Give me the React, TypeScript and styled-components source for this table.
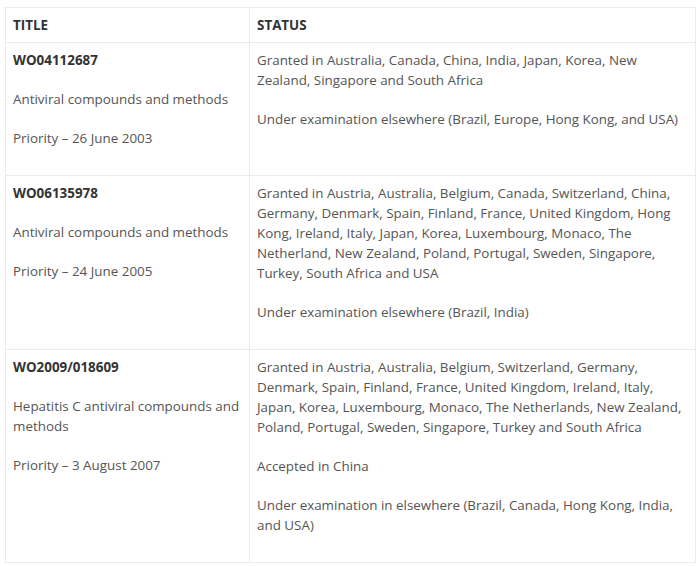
import React from "react";
import styled, { createGlobalStyle } from "styled-components";

const GlobalStyle = createGlobalStyle`
  html, body {
    margin: 0;
    padding: 0;
    background: #fff;
  }
  body {
    font-family: "Open Sans", "Liberation Sans", sans-serif;
    font-size: 13.4px;
    line-height: 20px;
    color: #555;
  }
`;

const Page = styled.div`
  padding: 7px 5px;
`;

const Table = styled.table`
  width: 691px;
  border-collapse: collapse;
  border: 1px solid #ebebeb;
  table-layout: fixed;
`;

const HeadCell = styled.th<{ $width?: number }>`
  box-sizing: border-box;
  width: ${(p) => (p.$width ? `${p.$width}px` : "auto")};
  text-align: left;
  font-weight: 700;
  text-transform: uppercase;
  color: #333;
  padding: 7px 7px;
  border: 1px solid #ebebeb;
`;

const Cell = styled.td`
  vertical-align: top;
  padding: 7px 7px 8px;
  border: 1px solid #ebebeb;

  p {
    margin: 0 0 19px;
  }
`;

const Code = styled.p`
  font-weight: 700;
  color: #333;
`;

type Patent = {
  code: string;
  title: string;
  priority: string;
  status: string[];
};

const patents: Patent[] = [
  {
    code: "WO04112687",
    title: "Antiviral compounds and methods",
    priority: "Priority – 26 June 2003",
    status: [
      "Granted in Australia, Canada, China, India, Japan, Korea, New Zealand, Singapore and South Africa",
      "Under examination elsewhere (Brazil, Europe, Hong Kong, and USA)",
    ],
  },
  {
    code: "WO06135978",
    title: "Antiviral compounds and methods",
    priority: "Priority – 24 June 2005",
    status: [
      "Granted in Austria, Australia, Belgium, Canada, Switzerland, China, Germany, Denmark, Spain, Finland, France, United Kingdom, Hong Kong, Ireland, Italy, Japan, Korea, Luxembourg, Monaco, The Netherland, New Zealand, Poland, Portugal, Sweden, Singapore, Turkey, South Africa and USA",
      "Under examination elsewhere (Brazil, India)",
    ],
  },
  {
    code: "WO2009/018609",
    title: "Hepatitis C antiviral compounds and methods",
    priority: "Priority – 3 August 2007",
    status: [
      "Granted in Austria, Australia, Belgium, Switzerland, Germany, Denmark, Spain, Finland, France, United Kingdom, Ireland, Italy, Japan, Korea, Luxembourg, Monaco, The Netherlands, New Zealand, Poland, Portugal, Sweden, Singapore, Turkey and South Africa",
      "Accepted in China",
      "Under examination in elsewhere (Brazil, Canada, Hong Kong, India, and USA)",
    ],
  },
];

const App: React.FunctionComponent = () => {
  return (
    <Page>
      <GlobalStyle />
      <Table>
        <thead>
          <tr>
            <HeadCell $width={244}>Title</HeadCell>
            <HeadCell>Status</HeadCell>
          </tr>
        </thead>
        <tbody>
          {patents.map((p) => (
            <tr key={p.code}>
              <Cell>
                <Code>{p.code}</Code>
                <p>{p.title}</p>
                <p>{p.priority}</p>
              </Cell>
              <Cell>
                {p.status.map((s) => (
                  <p key={s}>{s}</p>
                ))}
              </Cell>
            </tr>
          ))}
        </tbody>
      </Table>
    </Page>
  );
};

export default App;
